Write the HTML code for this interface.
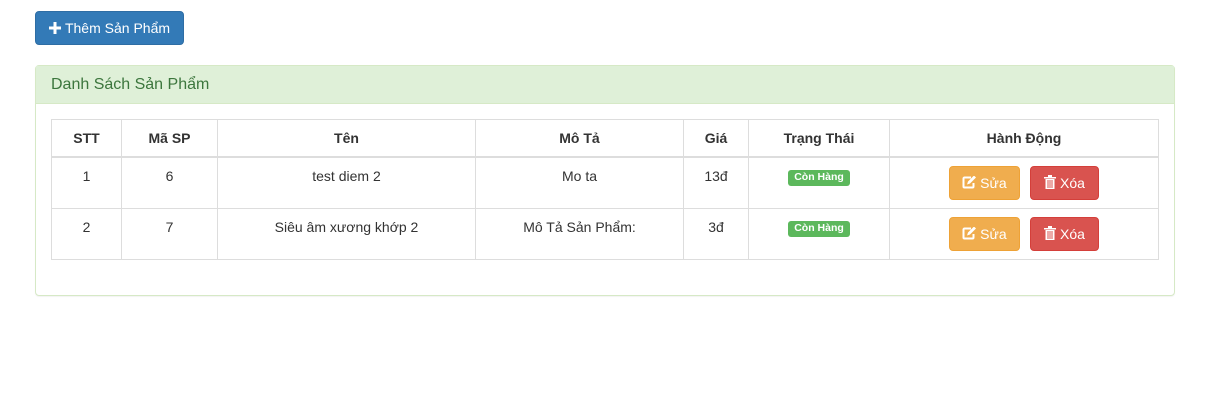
<!DOCTYPE html>
<html><head><meta charset="utf-8"><style>
body{margin:0;background:#fff;font-family:"Liberation Sans",sans-serif;font-size:14px;color:#333;width:1207px;height:417px;overflow:hidden;position:relative}
.btn{position:absolute;display:inline-block;border-radius:4px;color:#fff;font-size:14px;box-sizing:border-box;text-align:center}
.add{left:35px;top:11px;width:149px;height:34px;line-height:32px;background:#337ab7;border:1px solid #2e6da4}
.panel{position:absolute;left:35px;top:65px;width:1140px;height:231px;box-sizing:border-box;border:1px solid #d6e9c6;border-radius:4px;box-shadow:0 1px 1px rgba(0,0,0,.05)}
.ph{height:38px;background:#dff0d8;border-bottom:1px solid #d6e9c6;color:#3c763d;font-size:16px;line-height:38px;padding-left:15px;box-sizing:border-box}
table{position:absolute;left:15px;top:53px;border-collapse:collapse;width:1108px}
td,th{border:1px solid #ddd;text-align:center;vertical-align:top;padding:8px;line-height:20px}
th{border-bottom:2px solid #ddd;height:20px;padding:8px}
td{height:34px}
.lbl{display:inline-block;background:#5cb85c;color:#fff;font-size:10.5px;font-weight:bold;padding:2px 6px 3px;border-radius:3px;line-height:11px;vertical-align:top;margin-top:4px}
.ib{display:inline-block;height:34px;line-height:32px;border-radius:4px;color:#fff;font-size:14px;box-sizing:border-box;vertical-align:top}
.s{background:#f0ad4e;border:1px solid #eea236;width:71px;margin-right:10px}
.x{background:#d9534f;border:1px solid #d43f3a;width:69px}
</style></head><body>
<div class="btn add"><svg width="12" height="12" viewBox="0 0 12 12" style="vertical-align:-1px;margin-right:4px"><path d="M4.5 0h3v4.5H12v3H7.5V12h-3V7.5H0v-3h4.5z" fill="#fff"/></svg>Thêm Sản Phẩm</div>
<div class="panel"><div class="ph">Danh Sách Sản Phẩm</div>
<table>
<colgroup><col style="width:70px"><col style="width:96px"><col style="width:258px"><col style="width:208px"><col style="width:65px"><col style="width:141px"><col></colgroup>
<tr><th>STT</th><th>Mã SP</th><th>Tên</th><th>Mô Tả</th><th>Giá</th><th>Trạng Thái</th><th>Hành Động</th></tr>
<tr><td>1</td><td>6</td><td>test diem 2</td><td>Mo ta</td><td>13đ</td><td><span class="lbl">Còn Hàng</span></td><td><span class="ib s"><svg width="14" height="13" viewBox="0 0 14 13" style="vertical-align:-1px"><path d="M9 1.5H2.5a1 1 0 0 0-1 1v8a1 1 0 0 0 1 1h8a1 1 0 0 0 1-1V7" fill="none" stroke="#fff" stroke-width="2"/><path d="M5 8.5l1-3 6-6 2 2-6 6z" fill="#fff"/></svg> Sửa</span><span class="ib x"><svg width="12" height="14" viewBox="0 0 12 14" style="vertical-align:-1px"><path d="M0 2h12v1.5H0zM4 0h4v2H4zM1.5 4h9v10h-9z" fill="#fff"/><path d="M4 5v8M6 5v8M8 5v8" stroke="#d9534f" stroke-width="1"/></svg> Xóa</span></td></tr>
<tr><td>2</td><td>7</td><td>Siêu âm xương khớp 2</td><td>Mô Tả Sản Phẩm:</td><td>3đ</td><td><span class="lbl">Còn Hàng</span></td><td><span class="ib s"><svg width="14" height="13" viewBox="0 0 14 13" style="vertical-align:-1px"><path d="M9 1.5H2.5a1 1 0 0 0-1 1v8a1 1 0 0 0 1 1h8a1 1 0 0 0 1-1V7" fill="none" stroke="#fff" stroke-width="2"/><path d="M5 8.5l1-3 6-6 2 2-6 6z" fill="#fff"/></svg> Sửa</span><span class="ib x"><svg width="12" height="14" viewBox="0 0 12 14" style="vertical-align:-1px"><path d="M0 2h12v1.5H0zM4 0h4v2H4zM1.5 4h9v10h-9z" fill="#fff"/><path d="M4 5v8M6 5v8M8 5v8" stroke="#d9534f" stroke-width="1"/></svg> Xóa</span></td></tr>
</table></div>
</body></html>
